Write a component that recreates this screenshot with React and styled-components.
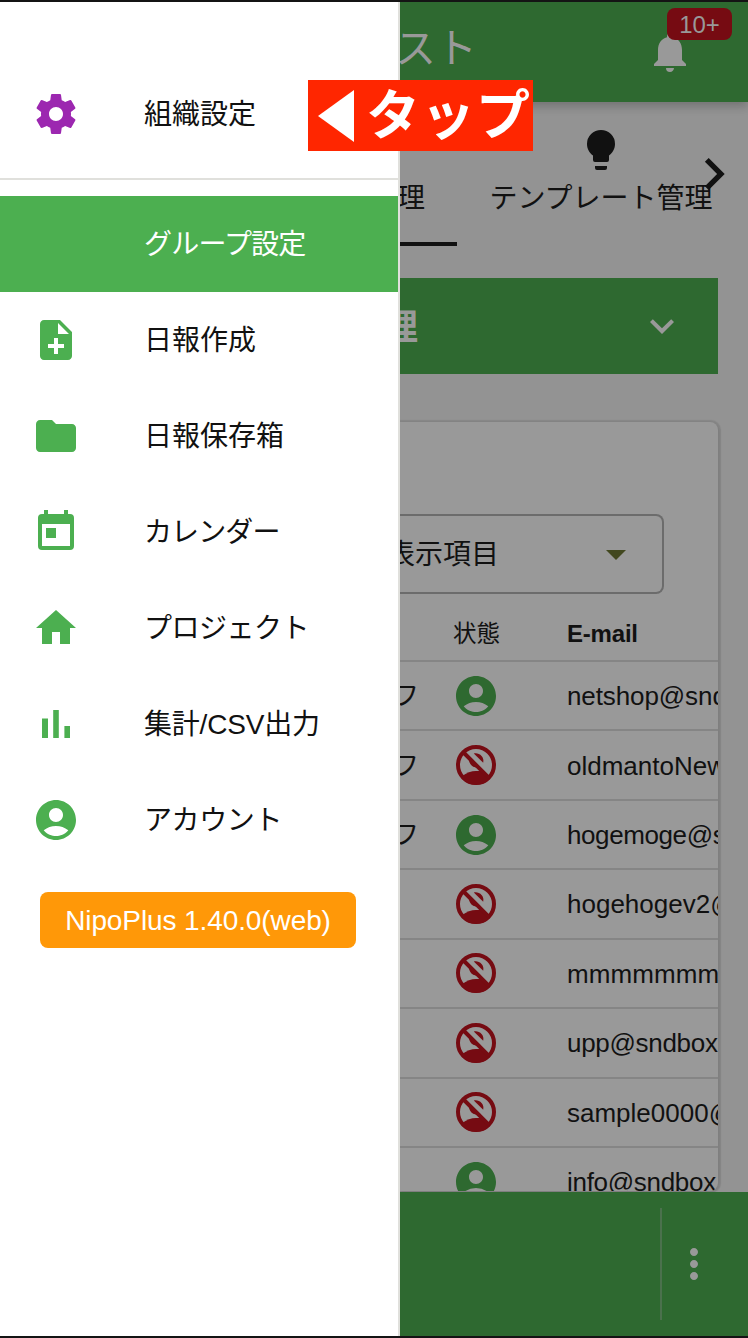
import React from "react";
import styled, { createGlobalStyle } from "styled-components";
import {
  MdNoteAdd, MdFolder, MdHome, MdAccountCircle,
  MdNotifications, MdChevronRight, MdKeyboardArrowDown, MdArrowDropDown, MdMoreVert,
} from "react-icons/md";

const c = {
  green: "#4caf50", dimGreen: "#2e6930", dimRed: "#760b12", dimWhite: "#999",
  dimPage: "#939393", line: "#858585", ink: "#111", orange: "#ff9808", purple: "#9c27b0",
};

const Global = createGlobalStyle`
  * { box-sizing: border-box; }
  body { margin: 0; background: #000; }
`;

const Screen = styled.div`
  position: relative;
  display: flex;
  width: 748px;
  height: 1338px;
  overflow: hidden;
  border-top: 2px solid #141414;
  border-bottom: 2px solid #141414;
  background: ${c.dimPage};
  color: ${c.ink};
  font-family: "Liberation Sans", "Noto Sans CJK JP", sans-serif;
  white-space: nowrap;
`;

/* Drawer */
const Drawer = styled.nav`
  flex: none;
  width: 400px;
  background: #fff;
  border-right: 2px solid #e0e0dc;
`;
const Section = styled.div`
  padding: ${p => p.$pad};
  border-bottom: ${p => (p.$divided ? "2px solid #e0e0dc" : "none")};
`;
const Item = styled.div`
  display: flex;
  align-items: center;
  height: 96px;
  padding-left: 32px;
  font-size: 28px;
  background: ${p => (p.$active ? c.green : "transparent")};
  color: ${p => (p.$active ? "#fff" : c.ink)};
`;
const ItemIcon = styled.span`
  display: flex;
  width: 112px;
  color: ${p => p.$color || c.green};
`;
const Label = styled.span`
  padding-top: 2px;
  line-height: 40px;
  letter-spacing: ${p => p.$tracking || 0}px;
`;
const Version = styled.div`
  display: flex;
  align-items: center;
  justify-content: center;
  width: 316px;
  height: 56px;
  margin: 24px 0 0 40px;
  padding-top: 2px;
  border-radius: 8px;
  background: ${c.orange};
  color: #fff;
  font-size: 28px;
  letter-spacing: -0.1px;
`;

/* Dimmed page */
const Page = styled.main`
  display: flex;
  flex-direction: column;
  width: 348px;
  height: 1334px;
  overflow: hidden;
`;
const Header = styled.header`
  position: relative;
  z-index: 1;
  flex: none;
  display: flex;
  align-items: center;
  justify-content: space-between;
  height: 100px;
  padding-right: 54px;
  background: ${c.dimGreen};
  color: ${c.dimWhite};
  box-shadow: 0 4px 8px rgba(0, 0, 0, 0.14), 0 6px 10px rgba(0, 0, 0, 0.07);
`;
const Title = styled.h1`
  margin: -14px 0 0 -5px;
  font-size: 41px;
  font-weight: 400;
`;
const Bell = styled.div`
  position: relative;
  display: flex;
`;
const Badge = styled.span`
  position: absolute;
  top: -20px;
  left: 21px;
  width: 65px;
  height: 32px;
  border-radius: 8px;
  background: ${c.dimRed};
  text-align: center;
  font-size: 24px;
  line-height: 34px;
`;
const Tabs = styled.div`
  position: relative;
  flex: none;
  display: flex;
  height: 144px;
  font-size: 28px;
  line-height: 40px;
`;
const Tab = styled.div`
  display: flex;
  flex-direction: column;
  align-items: ${p => (p.$selected ? "flex-start" : "center")};
  justify-content: flex-end;
  width: ${p => p.$width}px;
  padding-bottom: ${p => (p.$selected ? 23 : 27)}px;
  border-bottom: ${p => (p.$selected ? `4px solid ${c.ink}` : "none")};
  svg { margin-bottom: 5px; }
`;
const Clipped = styled.span`
  margin: ${p => p.$lift ? -p.$lift : 0}px 0 0 ${p => -p.$by}px;
`;
const ScrollArrow = styled.div`
  position: absolute;
  right: 2px;
  top: 40px;
  display: flex;
`;
const Content = styled.div`
  flex: 1;
  min-height: 0;
  padding: 32px 30px 0 0;
`;
const Band = styled.div`
  display: flex;
  align-items: center;
  justify-content: space-between;
  height: 96px;
  padding-right: 32px;
  background: ${c.dimGreen};
  color: ${c.dimWhite};
  font-size: 36px;
  font-weight: 700;
`;
const Card = styled.section`
  height: 769px;
  margin-top: 48px;
  border-radius: 0 8px 8px 0;
  background: ${c.dimWhite};
  box-shadow: 1px 0 1px 2px rgba(0, 0, 0, 0.09), 1px 1px 3px 0 rgba(0, 0, 0, 0.08);
  overflow: hidden;
`;
const Select = styled.div`
  display: flex;
  align-items: center;
  justify-content: space-between;
  width: 264px;
  height: 80px;
  margin-top: 92px;
  padding-right: 22px;
  border: 2px solid #6c6c6c;
  border-left: 0;
  border-radius: 0 8px 8px 0;
  font-size: 28px;
  svg { color: #42481f; }
`;
const Row = styled.div`
  display: grid;
  grid-template-columns: 52px 115px 1fr;
  align-items: center;
  height: ${p => (p.$head ? 68 : 69.43)}px;
  border-bottom: 2px solid ${c.line};
  font-size: 26px;
`;
const StatusHead = styled.span`
  padding: 10px 0 0 1px;
  font-size: 23.5px;
`;
const MailHead = styled.span`
  padding-top: 14px;
  font-size: 24px;
  font-weight: 700;
  letter-spacing: -0.2px;
`;
const Role = styled.span`
  margin: -4px 0 0 -7px;
`;
const Status = styled.span`
  display: flex;
  color: ${p => (p.$ok ? c.dimGreen : c.dimRed)};
`;
const Mail = styled.span`
  padding-top: 2px;
  letter-spacing: ${p => p.$tracking || 0}px;
`;
const Footer = styled.footer`
  position: relative;
  z-index: 1;
  flex: none;
  display: flex;
  justify-content: flex-end;
  height: 144px;
  padding: 16px 0;
  background: ${c.dimGreen};
  color: ${c.dimWhite};
`;
const More = styled.div`
  display: flex;
  align-items: center;
  width: 88px;
  padding-left: 8px;
  border-left: 2px solid #4b714d;
`;
const Callout = styled.div`
  position: absolute;
  z-index: 2;
  left: 308px;
  top: 78px;
  display: flex;
  align-items: center;
  width: 225px;
  height: 71px;
  padding-left: 10px;
  background: #ff2600;
  color: #fff;
  font-size: 54px;
  font-weight: 700;
  line-height: 71px;
`;
const CalloutText = styled.span`
  margin: 1px 0 0 12px;
  letter-spacing: 1px;
`;

const Svg = styled.svg.attrs({ width: 48, height: 48, viewBox: "0 0 24 24", fill: "currentColor" })`
  display: block;
`;
const GearIcon = () => (
  <Svg>
    <path d="M19.43 12.98c.04-.32.07-.64.07-.98s-.03-.66-.07-.98l2.110-1.650c.19-.15.24-.42.12-.64l-2-3.460c-.12-.22-.39-.3-.61-.22l-2.490 1c-.52-.4-1.080-.73-1.690-.98l-.38-2.650C14.460 2.180 14.250 2 14 2h-4c-.25 0-.46.18-.49.42l-.38 2.650c-.61.25-1.170.59-1.690.98l-2.490-1c-.23-.09-.49 0-.61.22l-2 3.460c-.13.22-.07.49.12.64l2.110 1.650c-.04.32-.07.65-.07.98s.03.66.07.98l-2.110 1.650c-.19.15-.24.42-.12.64l2 3.460c.12.22.39.3.61.22l2.490-1c.52.4 1.080.73 1.690.98l.38 2.650c.03.24.24.42.49.42h4c.25 0 .46-.18.49-.42l.38-2.650c.61-.25 1.170-.59 1.690-.98l2.490 1c.23.09.49 0 .61-.22l2-3.460c.12-.22.07-.49-.12-.64zM12 15.500c-1.930 0-3.500-1.570-3.500-3.500s1.570-3.500 3.500-3.500 3.500 1.570 3.500 3.500-1.570 3.500-3.500 3.500z" />
  </Svg>
);
const BulbIcon = () => (
  <Svg>
    <path d="M12 2a7 7 0 0 0-7 7c0 2.380 1.190 4.470 3 5.740V17a1 1 0 0 0 1 1h6a1 1 0 0 0 1-1v-2.260c1.810-1.270 3-3.360 3-5.740a7 7 0 0 0-7-7M9 21a1 1 0 0 0 1 1h4a1 1 0 0 0 1-1v-1H9z" />
  </Svg>
);
const CalendarIcon = () => (
  <Svg>
    <path d="M19 3h-1V1h-2v2H8V1H6v2H5a2 2 0 0 0-2 2v14a2 2 0 0 0 2 2h14a2 2 0 0 0 2-2V5a2 2 0 0 0-2-2zm0 16H5V8h14zM7 10h5v5H7z" />
  </Svg>
);
const ChartIcon = () => (
  <Svg>
    <path d="M5 9.2h3V19H5zM10.6 5h2.8v14h-2.8zm5.6 8H19v6h-2.8z" />
  </Svg>
);
const BlockedIcon = () => (
  <Svg>
    <circle cx="12" cy="12" r="9" fill="none" stroke="currentColor" strokeWidth="2" />
    <path d="M5 17.600C7.200 15.900 9.700 15 12 15h3l4 4A9.800 9.800 0 0 1 4.800 18.600z" />
    <path d="M10.900 6.200C13.400 5.600 16.300 7.600 15.600 10.900z" />
    <path d="M8.300 8.500C8.500 11 9.600 12.900 11.600 13.100L14 14.200z" />
    <path d="M5.500 5.500L18.700 18.700" fill="none" stroke="currentColor" strokeWidth="2" />
  </Svg>
);

const menu = [
  { label: "グループ設定", active: true, tracking: -0.8 },
  { label: "日報作成", icon: <MdNoteAdd size={48} /> },
  { label: "日報保存箱", icon: <MdFolder size={48} /> },
  { label: "カレンダー", icon: <CalendarIcon />, tracking: -0.9 },
  { label: "プロジェクト", icon: <MdHome size={48} />, tracking: -0.5 },
  { label: "集計/CSV出力", icon: <ChartIcon />, tracking: -0.2 },
  { label: "アカウント", icon: <MdAccountCircle size={48} />, tracking: -0.4 },
];
const users = [
  { mail: "netshop@sndbox.jp", ok: true, role: "フ", tracking: -0.1 },
  { mail: "oldmantoNewman", ok: false, role: "フ", tracking: 0 },
  { mail: "hogemoge@sndbox", ok: true, role: "フ", tracking: -0.4 },
  { mail: "hogehogev2@sndbox", ok: false, tracking: 0 },
  { mail: "mmmmmmmmm", ok: false, tracking: 0.1 },
  { mail: "upp@sndbox.jp", ok: false, tracking: -0.3 },
  { mail: "sample0000@sndbox", ok: false, tracking: 0 },
  { mail: "info@sndbox.jp", ok: true, tracking: -0.3 },
];

export default function App() {
  return (
    <>
      <Global />
      <Screen>
        <Drawer>
          <Section $pad="64px 0 16px" $divided>
            <Item>
              <ItemIcon $color={c.purple}><GearIcon /></ItemIcon>
              <Label>組織設定</Label>
            </Item>
          </Section>
          <Section $pad="16px 0 0">
            {menu.map(m => (
              <Item key={m.label} $active={m.active}>
                <ItemIcon>{m.icon}</ItemIcon>
                <Label $tracking={m.tracking}>{m.label}</Label>
              </Item>
            ))}
          </Section>
          <Version>NipoPlus 1.40.0(web)</Version>
        </Drawer>
        <Page>
          <Header>
            <Title>スト</Title>
            <Bell><MdNotifications size={48} /><Badge>10+</Badge></Bell>
          </Header>
          <Tabs>
            <Tab $selected $width={57}><Clipped $by={3}>理</Clipped></Tab>
            <Tab $width={288}><BulbIcon />テンプレート管理</Tab>
            <ScrollArrow><MdChevronRight size={64} /></ScrollArrow>
          </Tabs>
          <Content>
            <Band><Clipped $by={18} $lift={4}>理</Clipped><MdKeyboardArrowDown size={48} /></Band>
            <Card>
              <Select><Clipped $by={13} $lift={4}>表示項目</Clipped><MdArrowDropDown size={48} /></Select>
              <Row $head>
                <span />
                <StatusHead>状態</StatusHead>
                <MailHead>E-mail</MailHead>
              </Row>
              {users.map(u => (
                <Row key={u.mail}>
                  <Role>{u.role}</Role>
                  <Status $ok={u.ok}>{u.ok ? <MdAccountCircle size={48} /> : <BlockedIcon />}</Status>
                  <Mail $tracking={u.tracking}>{u.mail}</Mail>
                </Row>
              ))}
            </Card>
          </Content>
          <Footer><More><MdMoreVert size={48} /></More></Footer>
        </Page>
        <Callout>
          <svg width="36" height="52" viewBox="0 0 36 52" fill="currentColor"><path d="M0 26L36 0v52z" /></svg>
          <CalloutText>タップ</CalloutText>
        </Callout>
      </Screen>
    </>
  );
}
